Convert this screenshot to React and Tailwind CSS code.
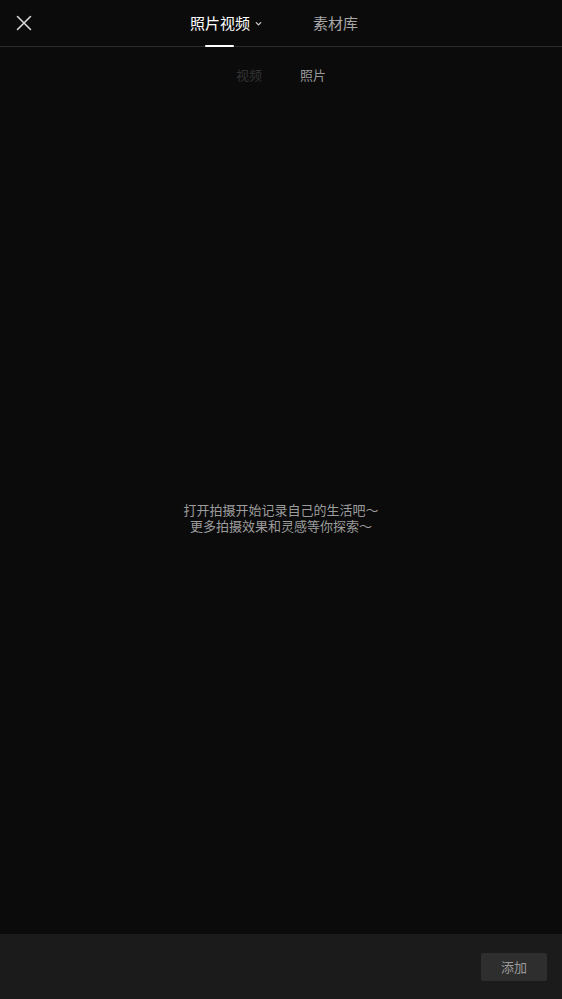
import React, { useState } from 'react';

const App = () => {
  const [sub, setSub] = useState('photo');

  return (
    <div
      className="flex flex-col w-full h-[999px] bg-[#0b0b0b] text-white"
      style={{ fontFamily: '"Noto Sans CJK SC", "Noto Sans", sans-serif' }}
    >
      {/* top bar */}
      <div className="relative flex items-center h-[47px] border-b border-[#2b2b2b]">
        <button className="absolute left-[15px] top-[14px] text-[#d8d8d8]">
          <svg width="18" height="18" viewBox="0 0 18 18" fill="none" stroke="currentColor" strokeWidth="1.6" strokeLinecap="round">
            <path d="M2.5 2.5l13 13M15.5 2.5l-13 13" />
          </svg>
        </button>
        <div className="flex w-full h-full">
          <div className="relative flex items-center h-full ml-[190px] pb-[1px]">
            <span className="text-[15px] font-normal text-white leading-none">照片视频</span>
            <svg className="ml-[4px] mt-[1px]" width="9" height="9" viewBox="0 0 10 10" fill="none" stroke="#cfcfcf" strokeWidth="1.4" strokeLinecap="round" strokeLinejoin="round">
              <path d="M2.5 4l2.5 2.5L7.5 4" />
            </svg>
            <div className="absolute left-[15px] bottom-[-1px] w-[29px] h-[2px] bg-white rounded-full" />
          </div>
          <div className="flex items-center h-full ml-[50px] pb-[1px]">
            <span className="text-[15px] text-[#a8a8a8] leading-none">素材库</span>
          </div>
        </div>
      </div>

      {/* sub tabs */}
      <div className="flex justify-center gap-[38px] pt-[21px] text-[13px] leading-none">
        <button
          onClick={() => setSub('video')}
          className={sub === 'video' ? 'text-[#9a9a9a]' : 'text-[#343434]'}
        >
          视频
        </button>
        <button
          onClick={() => setSub('photo')}
          className={sub === 'photo' ? 'text-[#9a9a9a]' : 'text-[#343434]'}
        >
          照片
        </button>
      </div>

      {/* empty state */}
      <div className="flex-1 flex flex-col items-center justify-center pt-[20px] text-[13px] leading-[16px] text-[#9c9c9c]">
        <p>打开拍摄开始记录自己的生活吧～</p>
        <p>更多拍摄效果和灵感等你探索～</p>
      </div>

      {/* bottom bar */}
      <div className="flex items-center justify-end h-[65px] bg-[#1b1b1b] pr-[15px]">
        <button className="w-[66px] h-[28px] rounded-[2px] bg-[#2e2e2e] text-[13px] text-[#9a9a9a]">
          添加
        </button>
      </div>
    </div>
  );
};

export default App;
